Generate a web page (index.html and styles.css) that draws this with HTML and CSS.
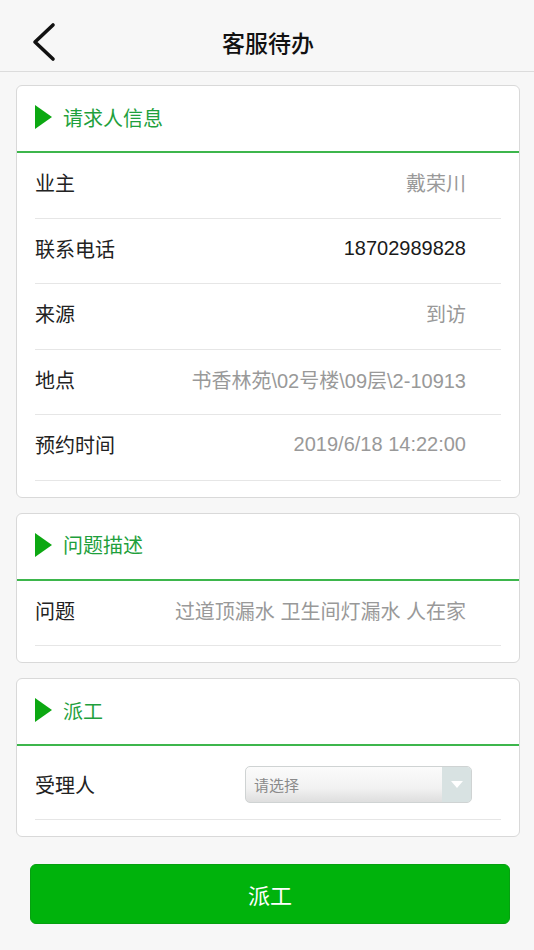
FILE: index.html
```html
<!DOCTYPE html>
<html lang="zh-CN">
<head>
    <meta charset="UTF-8">
    <meta name="viewport" content="width=device-width, initial-scale=1.0">
    <title>客服待办</title>
    <link rel="stylesheet" href="styles.css">
</head>
<body>
    <header class="topbar">
        <a class="back" href="#">
            <svg width="26" height="40" viewBox="0 0 26 40">
                <polyline points="22,3 4,20 22,37" fill="none" stroke="#111" stroke-width="3.6" stroke-linecap="round" stroke-linejoin="round"/>
            </svg>
        </a>
        <h1>客服待办</h1>
    </header>

    <main class="content">
        <!-- 请求人信息 -->
        <section class="card">
            <div class="card-title"><span class="arrow"></span>请求人信息</div>
            <div class="row"><span class="label">业主</span><span class="value">戴荣川</span></div>
            <div class="row"><span class="label">联系电话</span><span class="value dark">18702989828</span></div>
            <div class="row"><span class="label">来源</span><span class="value">到访</span></div>
            <div class="row"><span class="label">地点</span><span class="value">书香林苑\02号楼\09层\2-10913</span></div>
            <div class="row"><span class="label">预约时间</span><span class="value">2019/6/18 14:22:00</span></div>
        </section>

        <!-- 问题描述 -->
        <section class="card">
            <div class="card-title"><span class="arrow"></span>问题描述</div>
            <div class="row"><span class="label">问题</span><span class="value">过道顶漏水 卫生间灯漏水 人在家</span></div>
        </section>

        <!-- 派工 -->
        <section class="card">
            <div class="card-title"><span class="arrow"></span>派工</div>
            <div class="row tall">
                <span class="label">受理人</span>
                <div class="picker">
                    <span class="picker-text">请选择</span>
                    <span class="picker-btn"></span>
                </div>
            </div>
        </section>

        <button class="btn">派工</button>
    </main>
</body>
</html>
```

FILE: styles.css
```css
* { margin: 0; padding: 0; box-sizing: border-box; }
body {
    font-family: "Liberation Sans", "Noto Sans CJK SC", sans-serif;
    background: #f7f7f7;
    color: #222;
    width: 534px;
    min-height: 950px;
}
.topbar {
    height: 72px;
    background: #f7f7f7;
    border-bottom: 1px solid #dcdcdc;
    display: flex;
    align-items: center;
    justify-content: center;
    position: relative;
}
.topbar h1 { font-size: 23px; font-weight: 500; color: #111; margin-top: 12px; margin-left: 2px; }
.back { position: absolute; left: 31px; top: 22px; display: block; line-height: 0; }
.content { padding: 13px 14px 0 16px; }
.card {
    background: #fff;
    border: 1px solid #d9d9d9;
    border-radius: 6px;
    padding-bottom: 16px;
    margin-bottom: 15px;
}
.card-title {
    height: 67px;
    border-bottom: 2px solid #3db64c;
    display: flex;
    align-items: center;
    padding-left: 18px;
    padding-bottom: 3px;
    color: #1ea03c;
    font-size: 20px;
}
.arrow {
    width: 0;
    height: 0;
    border-top: 12.5px solid transparent;
    border-bottom: 12.5px solid transparent;
    border-left: 17px solid #0ca812;
    margin-right: 11px;
}
.row {
    height: 65.5px;
    margin: 0 18px;
    border-bottom: 1px solid #e6e6e6;
    display: flex;
    align-items: center;
    justify-content: space-between;
    padding-bottom: 5px;
    font-size: 20px;
}
.row.tall { height: 74px; padding-bottom: 0; padding-top: 4px; }
.label { color: #222; }
.value { color: #999; margin-right: 35px; }
.value.dark { color: #1a1a1a; }
.picker {
    width: 227px;
    height: 37px;
    margin-right: 29px;
    border: 1px solid #cfd3d3;
    border-radius: 5px;
    background: linear-gradient(#fbfbfb, #f2f2f2 60%, #dedede);
    display: flex;
    align-items: center;
    overflow: hidden;
}
.picker-text { flex: 1; padding-left: 8px; font-size: 15px; color: #8a8a8a; }
.picker-btn {
    width: 29px;
    height: 100%;
    background: #d8e2e2;
    display: flex;
    align-items: center;
    justify-content: center;
}
.picker-btn::after {
    content: "";
    border-left: 6px solid transparent;
    border-right: 6px solid transparent;
    border-top: 7px solid #fff;
}
.btn {
    display: block;
    width: 480px;
    height: 60px;
    margin: 27px 0 0 14px;
    background: #00b30c;
    border: 1px solid #06a010;
    border-radius: 6px;
    color: #fff;
    font-family: "Noto Sans CJK SC", sans-serif;
    font-size: 22px;
}
```
